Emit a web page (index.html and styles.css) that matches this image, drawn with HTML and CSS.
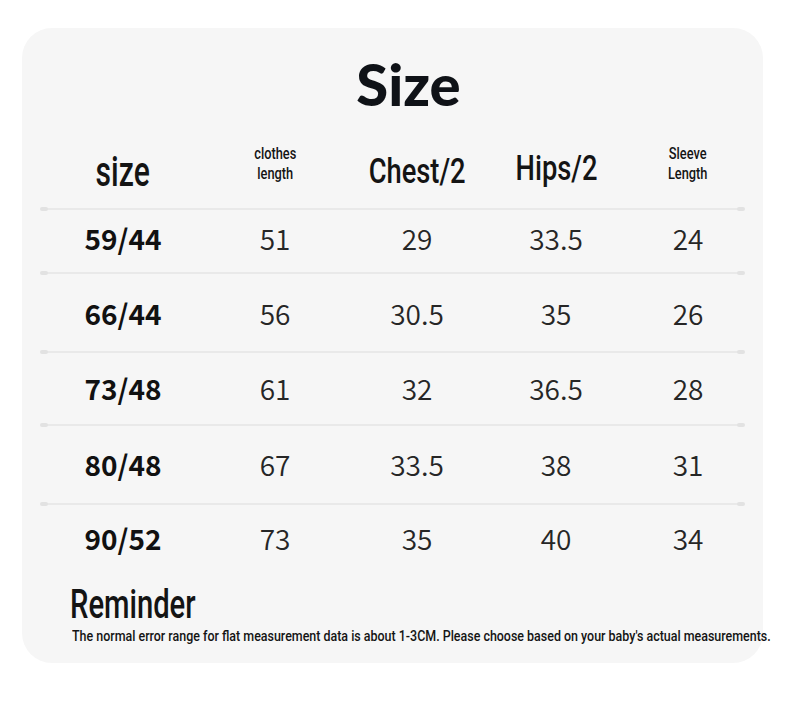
FILE: index.html
```html
<!DOCTYPE html>
<html>
<head>
<meta charset="utf-8">
<link rel="stylesheet" href="styles.css">
</head>
<body>
<div class="card">
  <h1 class="title">Size</h1>
  <div class="table">
    <div class="row head">
      <div class="cell"><span class="cond big">size</span></div>
      <div class="cell"><span class="cond small">clothes<br>length</span></div>
      <div class="cell"><span class="cond mid">Chest/2</span></div>
      <div class="cell"><span class="cond mid hips">Hips/2</span></div>
      <div class="cell"><span class="cond small">Sleeve<br>Length</span></div>
    </div>
    <div class="sep"></div>
    <div class="row r1">
      <div class="cell label">59/44</div><div class="cell">51</div><div class="cell">29</div><div class="cell">33.5</div><div class="cell">24</div>
    </div>
    <div class="sep"></div>
    <div class="row r2">
      <div class="cell label">66/44</div><div class="cell">56</div><div class="cell">30.5</div><div class="cell">35</div><div class="cell">26</div>
    </div>
    <div class="sep"></div>
    <div class="row r3">
      <div class="cell label">73/48</div><div class="cell">61</div><div class="cell">32</div><div class="cell">36.5</div><div class="cell">28</div>
    </div>
    <div class="sep"></div>
    <div class="row r4">
      <div class="cell label">80/48</div><div class="cell">67</div><div class="cell">33.5</div><div class="cell">38</div><div class="cell">31</div>
    </div>
    <div class="sep"></div>
    <div class="row r5">
      <div class="cell label">90/52</div><div class="cell">73</div><div class="cell">35</div><div class="cell">40</div><div class="cell">34</div>
    </div>
  </div>
  <div class="reminder"><span class="cond rem">Reminder</span></div>
  <div class="note"><span class="cond notetext">The normal error range for flat measurement data is about 1-3CM. Please choose based on your baby's actual measurements.</span></div>
</div>
</body>
</html>
```

FILE: styles.css
```css
* { box-sizing: border-box; }
html, body { margin: 0; padding: 0; background: #ffffff; }
body { width: 790px; height: 716px; overflow: hidden; }

.card {
  margin: 28px 0 0 22px;
  width: 741px;
  height: 635px;
  background: #f6f6f6;
  border-radius: 30px;
  padding-top: 22px;
}

.title {
  margin: 0;
  text-align: center;
  font-family: Lato, "Noto Sans", sans-serif;
  font-weight: 900;
  font-size: 58px;
  line-height: 68px;
  color: #0f1217;
  padding-left: 32px;
}

.table { margin-top: 22px; }

.row {
  display: grid;
  grid-template-columns: 162px 142px 142px 136px 128px;
  margin-left: 20px;
  align-items: center;
  font-family: "Noto Sans CJK SC", "Noto Sans", sans-serif;
  font-weight: 350;
  font-size: 28px;
  color: #262626;
}
.cell { text-align: center; line-height: 1; }
.label { font-weight: 700; color: #111; }

.head { height: 68px; padding-bottom: 6px; color: #151515; }
.r1 { height: 62px; padding-bottom: 6px; }
.r2 { height: 77px; }
.r3 { height: 71px; padding-bottom: 2px; }
.r4 { height: 77px; padding-bottom: 2px; }
.r5 { height: 74px; padding-bottom: 8px; }

.sep {
  position: relative;
  margin-left: 20px;
  width: 701px;
  height: 2px;
  background: #e9e9e9;
}
.sep::before, .sep::after {
  content: "";
  position: absolute;
  top: -1px;
  width: 8px;
  height: 4px;
  border-radius: 2px;
  background: #e2e2e2;
}
.sep::before { left: -2px; }
.sep::after { right: -2px; }

.cond {
  display: inline-block;
  font-family: Roboto, "Liberation Sans", sans-serif;
  font-weight: 500;
  color: #141414;
}
.big { font-size: 43px; line-height: 42px; transform: scaleX(0.7); }
.mid { font-size: 35px; line-height: 35px; transform: scaleX(0.78); }
.hips { margin-bottom: 6px; }
.small { font-size: 16px; line-height: 20px; transform: scaleX(0.8); margin-bottom: 14px; }

.reminder { margin: 4px 0 0 48px; height: 44px; }
.rem {
  font-size: 40px;
  line-height: 44px;
  transform: scaleX(0.73);
  transform-origin: left center;
}
.note {
  margin: 0 0 0 50px;
  width: 701px;
  height: 20px;
  overflow: hidden;
  white-space: nowrap;
}
.notetext {
  font-size: 15px;
  line-height: 18px;
  transform: scaleX(0.83);
  transform-origin: left center;
}
```
